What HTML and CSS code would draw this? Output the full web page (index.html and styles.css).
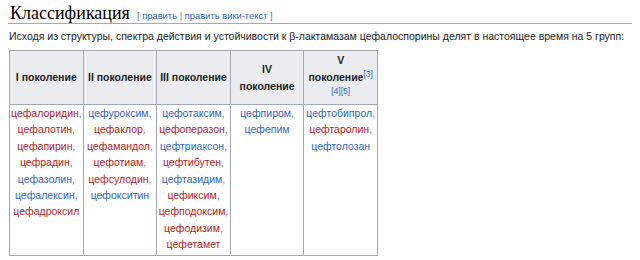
FILE: index.html
```html
<!DOCTYPE html>
<html lang="ru">
<head>
<meta charset="utf-8">
<title>Классификация</title>
<link rel="stylesheet" href="styles.css">
</head>
<body>
<div class="content">
  <h2 class="heading"><span class="headline">Классификация</span><span class="editsection"><span class="br">[</span> <a class="blue">править</a> <span class="sep">|</span> <a class="blue">править вики-текст</a> <span class="br">]</span></span></h2>
  <p class="intro">Исходя из структуры, спектра действия и устойчивости к β-лактамазам цефалоспорины делят в настоящее время на 5 групп:</p>
  <table class="wikitable">
    <colgroup><col class="c"><col class="c"><col class="c"><col class="c"><col class="c"></colgroup>
    <thead>
      <tr>
        <th>I поколение</th>
        <th>II поколение</th>
        <th>III поколение</th>
        <th>IV<br>поколение</th>
        <th>V<br>поколение<sup class="ref">[3]</sup><br><sup class="ref">[4]</sup><sup class="ref">[5]</sup></th>
      </tr>
    </thead>
    <tbody>
      <tr>
        <td><a class="red">цефалоридин</a>, <a class="red">цефалотин</a>, <a class="red">цефапирин</a>, <a class="red">цефрадин</a>, <a class="blue">цефазолин</a>, <a class="blue">цефалексин</a>, <a class="red">цефадроксил</a></td>
        <td><a class="blue">цефуроксим</a>, <a class="red">цефаклор</a>, <a class="red">цефамандол</a>, <a class="red">цефотиам</a>, <a class="red">цефсулодин</a>, <a class="blue">цефокситин</a></td>
        <td><a class="blue">цефотаксим</a>, <a class="red">цефоперазон</a>, <a class="blue">цефтриаксон</a>, <a class="red">цефтибутен</a>, <a class="blue">цефтазидим</a>, <a class="red">цефиксим</a>, <a class="red">цефподоксим</a>, <a class="red">цефодизим</a>, <a class="red">цефетамет</a></td>
        <td><a class="blue">цефпиром</a>, <a class="blue">цефепим</a></td>
        <td><a class="blue">цефтобипрол</a>, <a class="red">цефтаролин</a>, <a class="blue">цефтолозан</a></td>
      </tr>
    </tbody>
  </table>
</div>
</body>
</html>
```

FILE: styles.css
```css
html, body {
  margin: 0;
  padding: 0;
  background: #ffffff;
}
.content {
  padding: 0 8px 0 8px;
  font-family: "Liberation Sans", Arial, sans-serif;
  color: #222222;
}
.heading {
  margin: 0;
  padding: 4px 0 1px 2px;
  border-bottom: 1px solid #a2a9b1;
  font-weight: normal;
  display: flex;
  align-items: baseline;
}
.headline {
  font-family: "Liberation Serif", "Times New Roman", serif;
  font-size: 18px;
  line-height: 18px;
  color: #000000;
}
.editsection {
  margin-left: 7px;
  font-family: "Liberation Sans", Arial, sans-serif;
  font-size: 9.4px;
  color: #54595d;
}
.editsection .br, .editsection .sep {
  color: #72777d;
}
.intro {
  margin: 4px 0 6px 1px;
  font-size: 10.5px;
  line-height: 16px;
  color: #222222;
}
a {
  text-decoration: none;
}
.blue {
  color: #3366bb;
}
.red {
  color: #b32424;
}
.wikitable {
  margin-left: 1px;
  border-collapse: collapse;
  table-layout: fixed;
  width: 368px;
  background: #f8f9fa;
  border: 1px solid #a2a9b1;
  font-size: 10.5px;
  line-height: 16.4px;
}
.wikitable .c {
  width: 73.6px;
}
.wikitable th {
  background: #eaecf0;
  border: 1px solid #a2a9b1;
  padding: 1px 2px;
  font-weight: bold;
  text-align: center;
  vertical-align: middle;
  color: #222222;
  line-height: 17px;
}
.wikitable td {
  background: #ffffff;
  border: 1px solid #a2a9b1;
  padding: 0 1px 2px;
  text-align: center;
  vertical-align: top;
  color: #72777d;
}
.ref {
  font-size: 8.5px;
  font-weight: normal;
  line-height: 1;
  color: #3366bb;
}
```
